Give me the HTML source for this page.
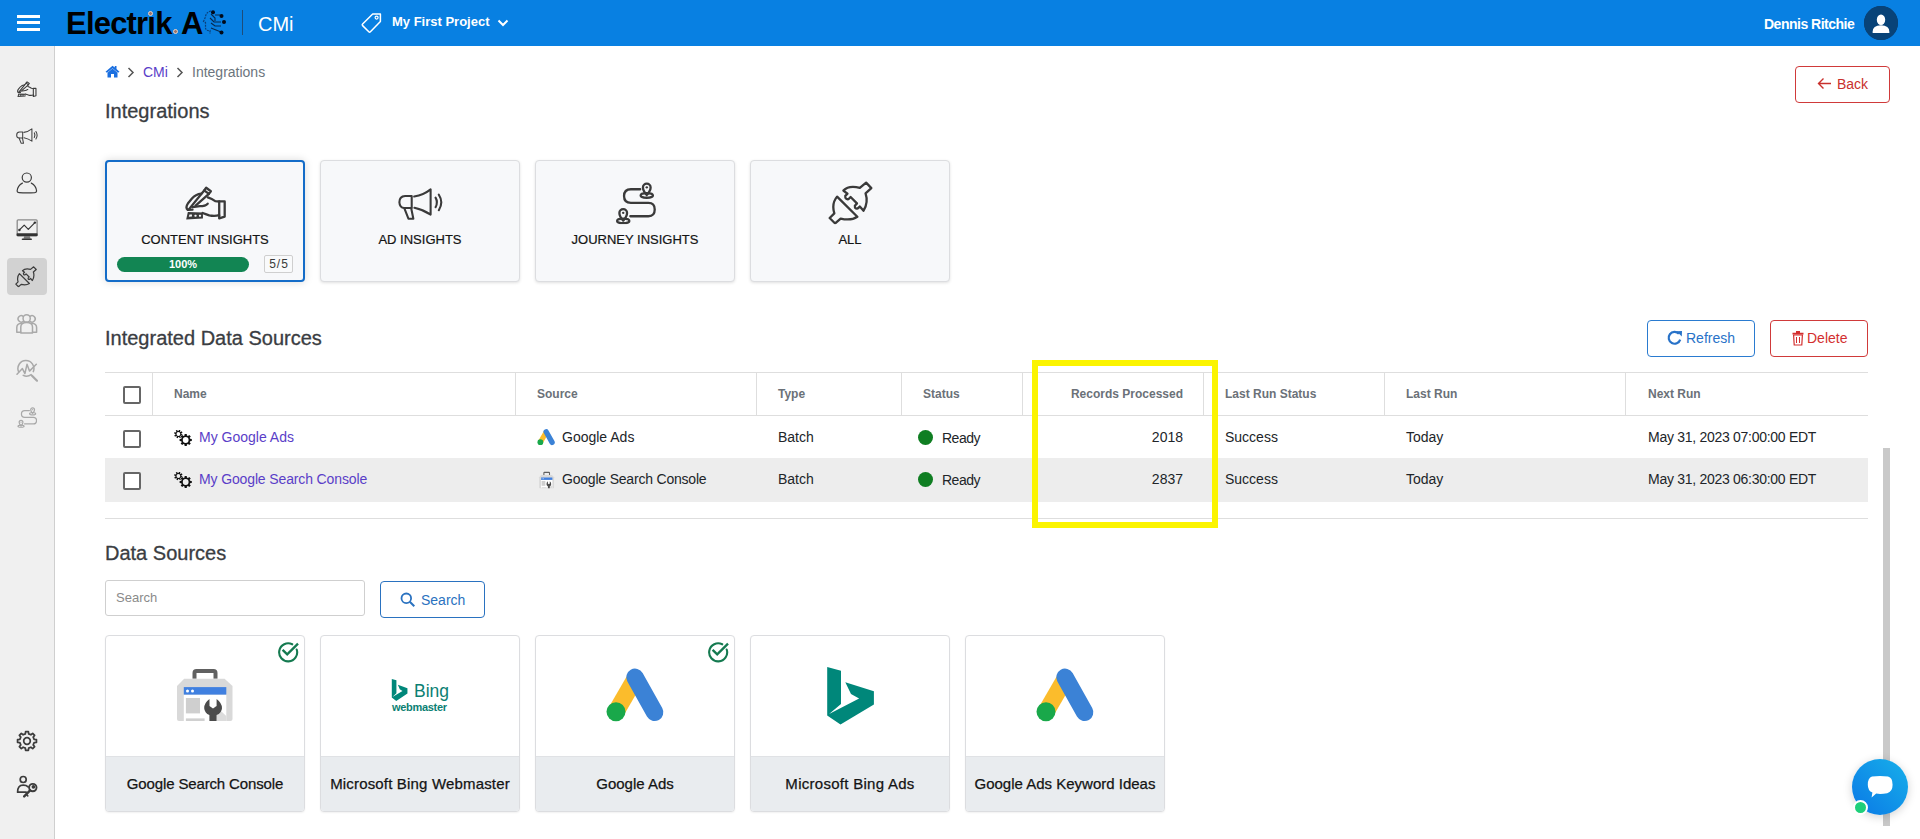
<!DOCTYPE html>
<html><head><meta charset="utf-8">
<style>
*{box-sizing:border-box;margin:0;padding:0}
html,body{width:1920px;height:839px;overflow:hidden;background:#fff;font-family:"Liberation Sans",sans-serif;color:#212529}
.a{position:absolute}
.t{position:absolute;white-space:nowrap;line-height:1}
#hdr{left:0;top:0;width:1920px;height:46px;background:#0880e2}
#side{left:0;top:46px;width:55px;height:793px;background:#f0f0f0;border-right:1px solid #cfcfcf}
.card{position:absolute;width:200px;height:122px;background:#f7f8fa;border:1px solid #dcdde0;border-radius:4px;box-shadow:0 1px 3px rgba(0,0,0,.12)}
.card.act{border:2px solid #146cc8;box-shadow:0 0 8px rgba(0,0,0,.15)}
.lbl{position:absolute;left:0;width:100%;text-align:center;font-size:13px;color:#141414;line-height:1;-webkit-text-stroke:0.2px #141414}
.th{position:absolute;font-size:12px;font-weight:700;color:#6b7178;white-space:nowrap;line-height:1}
.td{position:absolute;font-size:14px;color:#212529;white-space:nowrap;line-height:1}
.vl{position:absolute;top:372px;width:1px;height:43px;background:#dedede}
.cb{position:absolute;left:123px;width:18px;height:18px;border:2px solid #666;border-radius:2px;background:#fff}
.ds{position:absolute;top:635px;width:200px;height:177px;border:1px solid #dcdde0;border-radius:4px;background:#fff;overflow:hidden;box-shadow:0 1px 2px rgba(0,0,0,.06)}
.ds .bot{position:absolute;left:0;top:120px;width:100%;height:57px;background:#e9ecef;border-top:1px solid #e0e2e5}
.ds .nm{position:absolute;left:0;width:100%;text-align:center;top:140px;font-size:15px;color:#141414;-webkit-text-stroke:0.25px #141414;line-height:1;white-space:nowrap}
.ttl{font-size:20px;color:#3a3d42;-webkit-text-stroke:0.3px #3a3d42}
.btn{position:absolute;border:1px solid;border-radius:4px;background:#fff}
</style></head><body>

<svg width="0" height="0" style="position:absolute">
<defs>
<symbol id="i-hand" viewBox="80 110 775 630">
 <g fill="none" stroke-linejoin="round" stroke-linecap="round">
  <path d="M448 190 L484 142 L570 206 L534 254 Z"/>
  <path d="M448 190 L165 540 M534 254 L292 468"/>
  <path d="M150 545 Q100 505 150 430 L225 338 Q290 262 395 250"/>
  <path d="M515 318 Q590 345 650 385 L722 392"/>
  <path d="M722 390 L822 390 L822 668 L722 700 Z"/>
  <path d="M722 642 Q640 665 540 645 Q470 622 420 602"/>
  <path d="M512 432 Q470 478 370 478 L235 495"/>
  <path d="M150 545 L235 540"/>
 </g>
 <path d="M150 585 L425 595 L425 700 L120 720 Z" fill="currentColor" stroke="none"/>
 <g fill="#f7f8fa" stroke="none"><path d="M180 630 L225 630 L225 668 L168 672 Z"/><rect x="270" y="632" width="40" height="38" rx="12"/><rect x="352" y="632" width="40" height="38" rx="12"/></g>
</symbol>
<symbol id="i-mega" viewBox="70 140 830 590">
 <g fill="none" stroke-linejoin="round" stroke-linecap="round">
  <path d="M320 285 L200 285 Q95 290 95 400 Q100 500 185 505 L320 505 Z"/>
  <path d="M185 505 L260 700 L350 700 L310 505"/>
  <path d="M365 295 Q540 265 665 165 L665 625 Q540 540 370 500"/>
  <path d="M755 315 Q805 400 755 490"/>
  <path d="M815 262 Q905 400 815 545"/>
 </g>
</symbol>
<symbol id="i-journey" viewBox="110 80 750 770">
 <g fill="none" stroke-linejoin="round" stroke-linecap="round">
  <path d="M570 212 L400 212 Q275 212 275 337 Q275 462 400 462 L720 462 Q835 462 835 583 Q835 705 720 705 L390 705"/>
  <path d="M690 318 Q620 240 620 180 A70 70 0 1 1 760 180 Q760 240 690 318 Z"/>
  <ellipse cx="690" cy="325" rx="112" ry="42"/>
  <path d="M260 785 Q190 705 190 645 A70 70 0 1 1 330 645 Q330 705 260 785 Z"/>
  <ellipse cx="260" cy="790" rx="112" ry="42"/>
 </g>
 <g fill="currentColor" stroke="none"><circle cx="690" cy="178" r="22"/><circle cx="260" cy="643" r="22"/></g>
</symbol>
<symbol id="i-plug" viewBox="70 60 820 790">
 <g fill="none" stroke-linejoin="round" stroke-linecap="round">
  <path d="M235 345 L605 712 Q490 790 300 745 L200 835 L100 735 L185 650 Q130 470 235 345 Z"/>
  <path d="M350 235 Q450 130 650 185 L765 90 L860 190 L755 285 Q810 450 718 602 L650 525 L612 560 Q555 575 560 510 L598 468 L482 352 L442 392 Q380 400 385 330 L425 292 Z"/>
 </g>
</symbol>
<symbol id="i-person" viewBox="12 168 30 30">
 <g fill="none" stroke-linecap="round" stroke-linejoin="round"><circle cx="26.8" cy="177.6" r="4.6"/>
 <path d="M22.4 183.1 Q17.6 185.6 17.1 191 Q17.1 192.4 19 192.6 Q26.8 193.3 34.8 192.6 Q36.6 192.4 36.6 191 Q36.1 185.6 31.3 183.1"/></g>
</symbol>
<symbol id="i-monitor" viewBox="12 214 30 30">
 <rect x="17.2" y="219.8" width="19.9" height="15.8" rx="1" fill="none" stroke="#8a8a8a" stroke-width="1.3"/>
 <rect x="16.6" y="233.3" width="21" height="3" rx="0.8" fill="#333"/>
 <path d="M24.2 236 L29.9 236 L30.6 238.8 L23.5 238.8 Z" fill="#777"/>
 <rect x="21.7" y="238.4" width="10.3" height="1.7" rx="0.8" fill="#333"/>
 <path d="M19.2 230.1 L24.2 225.1 L28.3 229.4 L34.9 222.6" fill="none" stroke="#333" stroke-width="1.15" stroke-linejoin="round"/>
 <circle cx="19.4" cy="230" r="1.2" fill="#333"/><circle cx="34.9" cy="222.6" r="1.2" fill="#333"/>
</symbol>
<symbol id="i-group" viewBox="16 312 22 22">
 <g fill="none" stroke-linecap="round" stroke-linejoin="round">
  <circle cx="26.66" cy="318.4" r="3.6"/>
  <path d="M23.2 316.3 A3.2 3.2 0 1 0 23.3 321.4"/>
  <path d="M30.1 316.3 A3.2 3.2 0 1 1 30.0 321.4"/>
  <path d="M20.8 332.9 L20.8 327 Q20.8 322.6 26.66 322.6 Q32.5 322.6 32.5 327 L32.5 332.9 Z"/>
  <path d="M20.8 332.2 L16.8 332.2 L16.8 327.5 Q16.8 323.4 21.5 323.2"/>
  <path d="M32.5 332.2 L36.6 332.2 L36.6 327.5 Q36.6 323.4 31.8 323.2"/>
 </g>
</symbol>
<symbol id="i-analytics" viewBox="16 356 22 26">
 <g fill="none" stroke-linecap="round" stroke-linejoin="round">
  <path d="M18.6 371.8 A8 8 0 1 1 33.3 371.6"/>
  <path d="M23.2 375.4 A8 8 0 0 0 31.2 374.6"/>
  <path d="M32 375.7 L37 380.7" stroke-width="2.2"/>
  <path d="M17 374.3 L22.4 368.6 L24.9 373.6 L27 364.3 L29.5 371.1 L36.3 364.3"/>
 </g>
</symbol>
<symbol id="i-gear" viewBox="-12 -12 24 24">
 <g fill="none" stroke-linejoin="round"><path d="M7.79 -1.81 L10.29 -1.51 L10.29 1.51 L7.79 1.81 L6.79 4.23 L8.35 6.21 L6.21 8.35 L4.23 6.79 L1.81 7.79 L1.51 10.29 L-1.51 10.29 L-1.81 7.79 L-4.23 6.79 L-6.21 8.35 L-8.35 6.21 L-6.79 4.23 L-7.79 1.81 L-10.29 1.51 L-10.29 -1.51 L-7.79 -1.81 L-6.79 -4.23 L-8.35 -6.21 L-6.21 -8.35 L-4.23 -6.79 L-1.81 -7.79 L-1.51 -10.29 L1.51 -10.29 L1.81 -7.79 L4.23 -6.79 L6.21 -8.35 L8.35 -6.21 L6.79 -4.23 Z"/><circle cx="0" cy="0" r="3.6"/></g>
</symbol>
<symbol id="i-userkey" viewBox="16 774 22 24">
 <g fill="none" stroke-linejoin="round" stroke-linecap="round">
  <circle cx="23.2" cy="779.5" r="3"/>
  <path d="M17.6 792.2 Q17.4 785.2 23.2 785.2 Q26.4 785.2 28.1 786.9 M17.6 792.2 L26.2 792.2"/>
  <circle cx="32.8" cy="787.6" r="3.7" stroke-width="1.9"/>
  <path d="M30.1 790.4 L24.2 796.4" stroke-width="2.4"/>
  <path d="M26.3 794.4 L27.8 795.9" stroke-width="1.5"/>
 </g>
 <circle cx="33.4" cy="786.8" r="1" fill="currentColor"/>
</symbol>
<symbol id="i-gears" viewBox="0 0 18 17">
 <path d="M7.40 4.12 L8.67 4.53 L8.22 5.98 L6.94 5.59 L6.43 6.21 L7.05 7.39 L5.70 8.10 L5.07 6.92 L4.28 7.00 L3.87 8.27 L2.42 7.82 L2.81 6.54 L2.19 6.03 L1.01 6.65 L0.30 5.30 L1.48 4.67 L1.40 3.88 L0.13 3.47 L0.58 2.02 L1.86 2.41 L2.37 1.79 L1.75 0.61 L3.10 -0.10 L3.73 1.08 L4.52 1.00 L4.93 -0.27 L6.38 0.18 L5.99 1.46 L6.61 1.97 L7.79 1.35 L8.50 2.70 L7.32 3.33 Z M6.30 4.00 A1.9 1.9 0 1 0 2.50 4.00 A1.9 1.9 0 1 0 6.30 4.00 Z" fill="currentColor" fill-rule="evenodd"/>
 <path d="M16.15 8.82 L17.80 8.91 L17.80 11.09 L16.15 11.18 L15.68 12.31 L16.79 13.54 L15.24 15.09 L14.01 13.98 L12.88 14.45 L12.79 16.10 L10.61 16.10 L10.52 14.45 L9.39 13.98 L8.16 15.09 L6.61 13.54 L7.72 12.31 L7.25 11.18 L5.60 11.09 L5.60 8.91 L7.25 8.82 L7.72 7.69 L6.61 6.46 L8.16 4.91 L9.39 6.02 L10.52 5.55 L10.61 3.90 L12.79 3.90 L12.88 5.55 L14.01 6.02 L15.24 4.91 L16.79 6.46 L15.68 7.69 Z M14.60 10.00 A2.9 2.9 0 1 0 8.80 10.00 A2.9 2.9 0 1 0 14.60 10.00 Z" fill="currentColor" fill-rule="evenodd" stroke="#fff" stroke-width="0.6" paint-order="stroke"/>
</symbol>
<symbol id="i-gads" viewBox="0 0 80 80">
 <line x1="40" y1="24" x2="21" y2="56.7" stroke="#fbbc2c" stroke-width="17" stroke-linecap="butt"/>
 <line x1="40" y1="22.3" x2="59.6" y2="57.3" stroke="#3b82d6" stroke-width="17.5" stroke-linecap="round"/>
 <circle cx="21" cy="56.7" r="9.5" fill="#19a84a"/>
</symbol>
<symbol id="i-bing" viewBox="0 0 80 80">
 <path d="M17.2 11.9 L31 15.7 L31 49.1 L19.1 59.1 L49.1 43.4 L41 39.1 L35.3 27.2 L63.9 36.2 L63.9 49.6 L30.5 69.6 L17.2 60.5 Z" fill="#00877a"/>
</symbol>
<symbol id="i-gsc" viewBox="0 0 80 70">
 <path d="M29.5 18.8 L29.5 13 Q29.5 11 31.5 11 L48.5 11 Q50.5 11 50.5 13 L50.5 18.8" fill="none" stroke="#606060" stroke-width="4"/>
 <path d="M19.2 18.8 L59.6 18.8 L67.5 25.9 L67.5 59 Q67.5 61 65.5 61 L14 61 Q12 61 12 59 L12 25.9 Z" fill="#d9d9d9"/>
 <rect x="18.8" y="34.6" width="42.5" height="26.4" fill="#fff"/>
 <rect x="18.8" y="27.1" width="42.5" height="7.5" fill="#4080e0"/>
 <circle cx="22.5" cy="30.9" r="1.5" fill="#fff"/><circle cx="27.5" cy="30.9" r="1.5" fill="#fff"/>
 <rect x="20.9" y="38" width="14.1" height="15.4" fill="#cfcfcf"/>
 <rect x="20.9" y="58.4" width="18.7" height="2.6" fill="#d0d0d0"/>
 <path d="M50.5 46 L61.3 56 L61.3 61 L52 61 Z" fill="#dcdcdc"/>
 <path d="M44.5 39 Q39 43 39.2 48.2 Q39.5 53 44.4 55 L44.4 61 L51.6 61 L51.6 55 Q56.6 53 57 48.2 Q57 43 51.6 39 L51.6 46 L48 48.6 L44.5 46 Z" fill="#4b4b4b"/>
</symbol>
<symbol id="i-check" viewBox="0 0 22 22">
 <path d="M15.2 3.3 A9 9 0 1 0 19.7 8.5" fill="none" stroke="#157a50" stroke-width="2.1" stroke-linecap="round"/>
 <path d="M6.4 9.7 L10.2 13.3 L20.2 3.4" fill="none" stroke="#157a50" stroke-width="2.3" stroke-linecap="square"/>
</symbol>
</defs>
</svg>

<!-- HEADER -->
<div id="hdr" class="a">
  <div class="a" style="left:17px;top:15px;width:23px;height:3px;background:#fff"></div>
  <div class="a" style="left:17px;top:21px;width:23px;height:3px;background:#fff"></div>
  <div class="a" style="left:17px;top:28px;width:23px;height:3px;background:#fff"></div>
  <div class="t" style="left:66px;top:8px;font-size:31px;font-weight:700;color:#000;letter-spacing:-0.8px">Electr&#305;k</div>
  <div class="t" style="left:181px;top:8px;font-size:31px;font-weight:700;color:#000">A</div>
  <div class="a" style="left:242px;top:10px;width:1px;height:25px;background:#1d4d7a"></div>
  <div class="t" style="left:258px;top:14px;font-size:20px;color:#fff">CMi</div>
  <div class="t" style="left:392px;top:15px;font-size:13px;font-weight:700;color:#fff">My First Project</div>
  <div class="t" style="left:1764px;top:17px;font-size:14px;font-weight:700;color:#fff;letter-spacing:-0.5px">Dennis Ritchie</div>
  <div class="a" style="left:1864px;top:6px;width:34px;height:34px;border-radius:50%;background:#0b3d6e"></div>
</div>

<!-- SIDEBAR -->
<div id="side" class="a">
  <div class="a" style="left:7px;top:212px;width:40px;height:37px;background:#d2d2d2;border-radius:4px"></div>
</div>


<!-- SIDEBAR ICONS -->
<svg class="a" style="left:16.45px;top:80.95px;color:#3c3c3c;stroke:#3c3c3c" width="21.25" height="16.6" stroke-width="42"><use href="#i-hand"/></svg>
<svg class="a" style="left:16.2px;top:127.75px;color:#3c3c3c;stroke:#444" width="22.2" height="16.2" stroke-width="40"><use href="#i-mega"/></svg>
<svg class="a" style="left:12px;top:168px;stroke:#3c3c3c" width="30" height="30" stroke-width="1.2"><use href="#i-person"/></svg>
<svg class="a" style="left:12px;top:214px" width="30" height="30"><use href="#i-monitor"/></svg>
<svg class="a" style="left:15.46px;top:266.46px;color:#3c3c3c;stroke:#3c3c3c" width="22" height="21.2" stroke-width="46"><use href="#i-plug"/></svg>
<svg class="a" style="left:16px;top:312px;stroke:#a9a9a9" width="22" height="22" stroke-width="1.5"><use href="#i-group"/></svg>
<svg class="a" style="left:16px;top:356px;stroke:#a9a9a9" width="22" height="26" stroke-width="1.5"><use href="#i-analytics"/></svg>
<svg class="a" style="left:17px;top:406.8px;color:#a9a9a9;stroke:#a9a9a9" width="20.2" height="20.8" stroke-width="46"><use href="#i-journey"/></svg>
<svg class="a" style="left:16.2px;top:729.7px;stroke:#3c3c3c" width="22" height="22" stroke-width="1.9"><use href="#i-gear"/></svg>
<svg class="a" style="left:16px;top:774px;stroke:#3c3c3c;color:#3c3c3c" width="22" height="24" stroke-width="1.7"><use href="#i-userkey"/></svg>

<!-- BREADCRUMB -->
<div class="t" style="left:143px;top:65px;font-size:14px;color:#5a3ec8">CMi</div>
<div class="t" style="left:192px;top:65px;font-size:14px;color:#6c757d">Integrations</div>
<div class="t ttl" style="left:105px;top:101px">Integrations</div>

<div class="btn" style="left:1795px;top:66px;width:95px;height:37px;border-color:#d03a3a"></div>
<div class="t" style="left:1837px;top:77px;font-size:14px;color:#c9302c">Back</div>

<!-- CARDS -->
<div class="card act" style="left:105px;top:160px">
  <div class="lbl" style="top:71px">CONTENT INSIGHTS</div>
  <div class="a" style="left:10px;top:95px;width:132px;height:15px;border-radius:8px;background:#128553"><div class="t" style="left:0;width:132px;text-align:center;top:2px;font-size:11px;font-weight:700;color:#fff">100%</div></div>
  <div class="a" style="left:157px;top:93px;width:29px;height:18px;border:1px solid #cfcfcf;border-radius:2px;background:#f9fafb"><div class="t" style="left:0.5px;width:27px;text-align:center;top:2px;font-size:12px;color:#3a3a3a;letter-spacing:1px">5/5</div></div>
</div>
<div class="card" style="left:320px;top:160px"><div class="lbl" style="top:72px">AD INSIGHTS</div></div>
<div class="card" style="left:535px;top:160px"><div class="lbl" style="top:72px">JOURNEY INSIGHTS</div></div>
<div class="card" style="left:750px;top:160px"><div class="lbl" style="top:72px">ALL</div></div>


<!-- CARD ICONS -->
<svg class="a" style="left:184.4px;top:186px;color:#3a3a3a;stroke:#3a3a3a" width="42.5" height="34.6" stroke-width="42"><use href="#i-hand"/></svg>
<svg class="a" style="left:397.8px;top:187.7px;color:#3a3a3a;stroke:#3a3a3a" width="45.5" height="32.4" stroke-width="38"><use href="#i-mega"/></svg>
<svg class="a" style="left:615px;top:182.4px;color:#3a3a3a;stroke:#3a3a3a" width="41.1" height="42.2" stroke-width="42"><use href="#i-journey"/></svg>
<svg class="a" style="left:827.8px;top:181.3px;color:#3a3a3a;stroke:#3a3a3a" width="45" height="43.3" stroke-width="42"><use href="#i-plug"/></svg>

<!-- INTEGRATED DATA SOURCES -->
<div class="t ttl" style="left:105px;top:328px">Integrated Data Sources</div>
<div class="btn" style="left:1647px;top:320px;width:108px;height:37px;border-color:#2a7bd0"></div>
<div class="btn" style="left:1770px;top:320px;width:98px;height:37px;border-color:#d03a3a"></div>

<!-- TABLE -->
<div class="a" style="left:105px;top:372px;width:1763px;height:1px;background:#dedede"></div>
<div class="a" style="left:105px;top:415px;width:1763px;height:1px;background:#dedede"></div>
<div class="a" style="left:105px;top:458px;width:1763px;height:44px;background:#ededed"></div>
<div class="a" style="left:105px;top:518px;width:1763px;height:1px;background:#dedede"></div>


<!-- TABLE TEXT -->
<div class="cb" style="top:386px"></div>
<div class="cb" style="top:430px"></div>
<div class="cb" style="top:472px"></div>
<div class="vl" style="left:152px"></div>
<div class="vl" style="left:515px"></div>
<div class="vl" style="left:756px"></div>
<div class="vl" style="left:901px"></div>
<div class="vl" style="left:1022px"></div>
<div class="vl" style="left:1203px"></div>
<div class="vl" style="left:1384px"></div>
<div class="vl" style="left:1625px"></div>
<div class="th" style="left:174px;top:388px">Name</div>
<div class="th" style="left:537px;top:388px">Source</div>
<div class="th" style="left:778px;top:388px">Type</div>
<div class="th" style="left:923px;top:388px">Status</div>
<div class="th" style="left:1060px;width:123px;text-align:right;top:388px">Records Processed</div>
<div class="th" style="left:1225px;top:388px">Last Run Status</div>
<div class="th" style="left:1406px;top:388px">Last Run</div>
<div class="th" style="left:1648px;top:388px">Next Run</div>

<div class="td" style="left:199px;top:430px;color:#5a3ec8">My Google Ads</div>
<div class="td" style="left:562px;top:430px">Google Ads</div>
<div class="td" style="left:778px;top:430px">Batch</div>
<div class="a" style="left:918px;top:430px;width:15px;height:15px;border-radius:50%;background:#0f7e22"></div>
<div class="td" style="left:942px;top:431px;letter-spacing:-0.5px">Ready</div>
<div class="td" style="left:1100px;width:83px;text-align:right;top:430px">2018</div>
<div class="td" style="left:1225px;top:430px">Success</div>
<div class="td" style="left:1406px;top:430px">Today</div>
<div class="td" style="left:1648px;top:430px;letter-spacing:-0.28px">May 31, 2023 07:00:00 EDT</div>

<div class="td" style="left:199px;top:472px;color:#5a3ec8;letter-spacing:-0.13px">My Google Search Console</div>
<div class="td" style="left:562px;top:472px;letter-spacing:-0.2px">Google Search Console</div>
<div class="td" style="left:778px;top:472px">Batch</div>
<div class="a" style="left:918px;top:472px;width:15px;height:15px;border-radius:50%;background:#0f7e22"></div>
<div class="td" style="left:942px;top:473px;letter-spacing:-0.5px">Ready</div>
<div class="td" style="left:1100px;width:83px;text-align:right;top:472px">2837</div>
<div class="td" style="left:1225px;top:472px">Success</div>
<div class="td" style="left:1406px;top:472px">Today</div>
<div class="td" style="left:1648px;top:472px;letter-spacing:-0.28px">May 31, 2023 06:30:00 EDT</div>

<!-- DATA SOURCES -->
<div class="t ttl" style="left:105px;top:543px">Data Sources</div>
<div class="a" style="left:105px;top:580px;width:260px;height:36px;border:1px solid #cfcfcf;border-radius:3px;background:#fff"></div>
<div class="btn" style="left:380px;top:581px;width:105px;height:37px;border-color:#2a72c0"></div>

<div class="ds" style="left:105px"><div class="bot"></div><div class="nm" style="letter-spacing:-0.14px">Google Search Console</div></div>
<div class="ds" style="left:320px"><div class="bot"></div><div class="nm" style="letter-spacing:0.17px">Microsoft Bing Webmaster</div></div>
<div class="ds" style="left:535px"><div class="bot"></div><div class="nm">Google Ads</div></div>
<div class="ds" style="left:750px"><div class="bot"></div><div class="nm" style="letter-spacing:0.28px">Microsoft Bing Ads</div></div>
<div class="ds" style="left:965px"><div class="bot"></div><div class="nm">Google Ads Keyword Ideas</div></div>


<!-- HEADER ICONS -->
<svg class="a" style="left:360px;top:12px" width="23" height="22" viewBox="0 0 23 22"><path d="M12.7 2 L20.4 2 L20.4 9.5 L10.4 19.8 Q9.6 20.6 8.8 19.8 L2.6 13.6 Q1.8 12.8 2.6 12 Z" fill="none" stroke="#fff" stroke-width="1.5" stroke-linejoin="round"/><circle cx="16.6" cy="5.6" r="1.5" fill="none" stroke="#fff" stroke-width="1.2"/></svg>
<svg class="a" style="left:497px;top:19px" width="12" height="8" viewBox="0 0 12 8"><path d="M1.5 1.5 L6 6 L10.5 1.5" fill="none" stroke="#fff" stroke-width="2"/></svg>
<svg class="a" style="left:1864px;top:6px" width="34" height="34" viewBox="0 0 34 34"><circle cx="17" cy="17" r="17" fill="#084378"/><ellipse cx="17" cy="13.7" rx="4.2" ry="5.3" fill="#fff"/><path d="M8.6 26 Q8.6 19.3 17 19.3 Q25.4 19.3 25.4 26 L25.4 26.5 Q25.4 27 24.8 27 L9.2 27 Q8.6 27 8.6 26.5 Z" fill="#fff"/></svg>
<!-- logo dots and brain -->
<div class="a" style="left:148.2px;top:11.3px;width:5px;height:5px;border-radius:50%;background:#9a7468;border:1.2px solid #e8d2ca"></div>
<div class="a" style="left:173px;top:29.4px;width:5px;height:5px;border-radius:50%;background:#9a7468;border:1.2px solid #e8d2ca"></div>
<svg class="a" style="left:202px;top:9px" width="26" height="26" viewBox="0 0 26 26">
 <path d="M9 2 Q4 3 3.5 8 L1.5 12.5 L3.5 13.5 L3.5 19 Q4 22 8 21.5 L8 25" fill="none" stroke="#0a3e78" stroke-width="1.2" stroke-dasharray="2 1"/>
 <g stroke="#06284d" stroke-width="1.1" fill="none"><path d="M9 5 L13 9 L13 12 M8 9 L12 13 L19 13 M9 14 L13 17 L19 17 M9 19 L14 21 L19 23 M13 6 L18 6"/></g>
 <g fill="#020a18"><circle cx="11" cy="3.3" r="2"/><circle cx="19.5" cy="7" r="2"/><circle cx="22" cy="13" r="2"/><circle cx="19.5" cy="23.5" r="2"/></g>
</svg>

<!-- BREADCRUMB ICONS -->
<svg class="a" style="left:104.5px;top:65px" width="15" height="13" viewBox="0 0 15 14" preserveAspectRatio="none"><path d="M7.5 0.8 L0.5 7.2 L2 8.4 L7.5 3.4 L13 8.4 L14.5 7.2 L11.5 4.4 L11.5 1.2 L9.8 1.2 L9.8 2.8 Z" fill="#1a6fe0"/><path d="M2.5 8.3 L7.5 3.9 L12.5 8.3 L12.5 13.5 L9 13.5 L9 9.8 L6 9.8 L6 13.5 L2.5 13.5 Z" fill="#1a6fe0"/></svg>
<svg class="a" style="left:127px;top:67px" width="8" height="11" viewBox="0 0 8 11"><path d="M1.5 1 L6 5.5 L1.5 10" fill="none" stroke="#555" stroke-width="1.5"/></svg>
<svg class="a" style="left:176px;top:67px" width="8" height="11" viewBox="0 0 8 11"><path d="M1.5 1 L6 5.5 L1.5 10" fill="none" stroke="#555" stroke-width="1.5"/></svg>
<!-- back arrow -->
<svg class="a" style="left:1817px;top:77px" width="15" height="13" viewBox="0 0 15 13"><path d="M14 6.5 L1.5 6.5 M6.5 1.5 L1.5 6.5 L6.5 11.5" fill="none" stroke="#c9302c" stroke-width="1.4"/></svg>

<!-- REFRESH / DELETE -->
<svg class="a" style="left:1667px;top:330px" width="16" height="16" viewBox="0 0 16 16"><path d="M13.2 9.6 A5.9 5.9 0 1 1 11.9 3.8" fill="none" stroke="#2872c8" stroke-width="2.2"/><path d="M9.6 1.2 L15 1 L14.8 6.4 Z" fill="#2872c8"/></svg>
<div class="t" style="left:1686px;top:331px;font-size:14px;color:#2872c8">Refresh</div>
<svg class="a" style="left:1792px;top:330px" width="12" height="16" viewBox="0 0 12 16"><path d="M0.5 2.8 L11.5 2.8 L11.5 4.4 L0.5 4.4 Z M4 1 L8 1 L8 2.8 L4 2.8 Z" fill="#d32f2f"/><path d="M1.6 5 L10.4 5 L9.8 15 L2.2 15 Z" fill="none" stroke="#d32f2f" stroke-width="1.2"/><path d="M4.5 7 L4.5 13 M7.5 7 L7.5 13" stroke="#d32f2f" stroke-width="1"/></svg>
<div class="t" style="left:1807px;top:331px;font-size:14px;color:#d32f2f">Delete</div>

<!-- TABLE ICONS -->
<svg class="a" style="left:174px;top:430px;color:#111" width="18" height="17"><use href="#i-gears"/></svg>
<svg class="a" style="left:174px;top:472px;color:#111" width="18" height="17"><use href="#i-gears"/></svg>
<svg class="a" style="left:533.9px;top:425.3px" width="24.3" height="24.3"><use href="#i-gads"/></svg>
<svg class="a" style="left:535.6px;top:468.5px" width="21.4" height="22" viewBox="0 0 80 70" preserveAspectRatio="none"><use href="#i-gsc" width="80" height="70"/></svg>

<!-- SEARCH -->
<div class="t" style="left:116px;top:591px;font-size:13px;color:#8a8a8a">Search</div>
<svg class="a" style="left:400px;top:592px" width="16" height="16" viewBox="0 0 16 16"><circle cx="6.3" cy="6.3" r="4.8" fill="none" stroke="#2a72c0" stroke-width="1.8"/><path d="M9.8 9.8 L14.3 14.3" stroke="#2a72c0" stroke-width="2"/></svg>
<div class="t" style="left:421px;top:593px;font-size:14px;color:#2a72c0">Search</div>

<!-- DATA SOURCE LOGOS -->
<svg class="a" style="left:165px;top:660px" width="80" height="70"><use href="#i-gsc"/></svg>
<svg class="a" style="left:277px;top:641px" width="22" height="22"><use href="#i-check"/></svg>
<svg class="a" style="left:380px;top:665px" width="80" height="60" viewBox="0 0 80 60">
 <path transform="translate(11.8,13.9) scale(0.335,0.385) translate(-17.2,-11.9)" d="M17.2 11.9 L31 15.7 L31 49.1 L19.1 59.1 L49.1 43.4 L41 39.1 L35.3 27.2 L63.9 36.2 L63.9 49.6 L30.5 69.6 L17.2 60.5 Z" fill="#00877a"/>
 <text x="34" y="31.5" font-family="Liberation Sans" font-size="17.5" fill="#0b7f73">Bing</text>
 <text x="12" y="45.8" font-family="Liberation Sans" font-size="11" font-weight="700" fill="#0b7f73" textLength="55">webmaster</text>
</svg>
<svg class="a" style="left:595px;top:655px" width="80" height="80"><use href="#i-gads"/></svg>
<svg class="a" style="left:707px;top:641px" width="22" height="22"><use href="#i-check"/></svg>
<svg class="a" style="left:810px;top:655px" width="80" height="80"><use href="#i-bing"/></svg>
<svg class="a" style="left:1025px;top:655px" width="80" height="80"><use href="#i-gads"/></svg>

<!-- SCROLLBAR -->
<div class="a" style="left:1883px;top:448px;width:7px;height:378px;background:#c9c9c9"></div>

<!-- YELLOW HIGHLIGHT -->
<div class="a" style="left:1032px;top:360px;width:186px;height:168px;border:6px solid #fbf400"></div>

<!-- CHAT -->
<div class="a" style="left:1852px;top:759px;width:56px;height:56px;border-radius:50%;background:linear-gradient(225deg,#17b0ea 0%,#0a78e6 100%);box-shadow:0 2px 10px rgba(0,0,0,.18)"></div>
<svg class="a" style="left:1864px;top:773px" width="32" height="30" viewBox="0 0 32 30"><path d="M8 3.6 Q16 2.2 24 3.6 Q28.6 4.6 28.6 11.8 Q28.6 18.8 23.2 20.2 Q16.5 21.6 12.2 20.6 L7.6 24.4 L8.4 19.6 Q3.8 17.8 3.8 11.8 Q3.8 5 8 3.6 Z" fill="#fff"/></svg>
<div class="a" style="left:1852.5px;top:799.5px;width:15px;height:15px;border-radius:50%;background:#1ecf7a;border:2px solid #fff"></div>

</body></html>
